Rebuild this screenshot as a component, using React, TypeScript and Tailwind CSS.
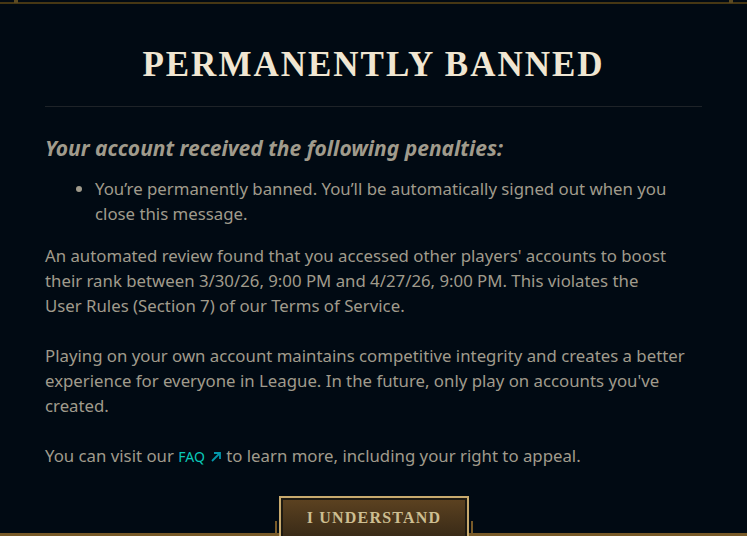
export default function App() {
    const body = "text-[#a09b8c] text-[16.8px] leading-[25px]";

    return (
        <div className="w-[747px] h-[536px] bg-[#010a13] relative overflow-hidden" style={{ fontFamily: '"Noto Sans", "Open Sans", sans-serif' }}>
            {/* top frame */}
            <div className="absolute top-[2px] left-0 right-0 h-[2px] bg-[#463714]" />
            <div className="absolute top-0 left-[14px] w-[4px] h-[3px] bg-[#5b4a22]" />
            <div className="absolute top-0 right-[14px] w-[4px] h-[3px] bg-[#5b4a22]" />

            <div className="px-[45px] pt-[45px]">
                <h1
                    className="text-center text-[#f0e6d2] text-[35px] leading-[40px] font-bold tracking-[2px]"
                    style={{ fontFamily: '"Liberation Serif", "DejaVu Serif", serif' }}
                >
                    PERMANENTLY BANNED
                </h1>
                <div className="mt-[21px] h-px bg-[#1e2328]" />

                <h2 className="mt-[27px] text-[#a09b8c] text-[21px] leading-[28px] font-bold italic">
                    Your account received the following penalties:
                </h2>

                <ul className={`mt-[14px] pl-[50px] list-disc ${body}`}>
                    <li>
                        You’re permanently banned. You’ll be automatically signed out when you close this message.
                    </li>
                </ul>

                <p className={`mt-[17px] pr-[25px] ${body}`}>
                    An automated review found that you accessed other players' accounts to boost their rank between 3/30/26, 9:00 PM and 4/27/26, 9:00 PM. This violates the User Rules (Section 7) of our Terms of Service.
                </p>
                <p className={`mt-[25px] ${body}`}>
                    Playing on your own account maintains competitive integrity and creates a better experience for everyone in League. In the future, only play on accounts you've created.
                </p>
                <p className={`mt-[25px] ${body}`}>
                    You can visit our{" "}
                    <span className="text-[#0ac8b9] text-[14px] inline-flex items-center gap-[5px]">
                        FAQ
                        <svg width="12" height="12" viewBox="0 0 12 12" fill="none" stroke="#0397ab" strokeWidth="1.8">
                            <path d="M2 10 L10 2 M4 2 H10 V8" />
                        </svg>
                    </span>{" "}
                    to learn more, including your right to appeal.
                </p>
            </div>

            {/* bottom frame */}
            <div className="absolute bottom-0 left-0 right-0 h-[3px] bg-[#785a28]" />

            {/* button */}
            <div className="absolute left-[275px] bottom-0 flex items-end gap-[2px]">
                <div className="w-[2px] h-[15px] bg-[#785a28]" />
                <div className="w-[190px] h-[40px] border-2 border-b-0 border-[#c8aa6e] bg-[#1e1a12] p-[2px] pb-0">
                    <div
                        className="h-full flex items-center justify-center bg-gradient-to-b from-[#5b4120] to-[#3a2b17] text-[#cdbe91] text-[16px] font-bold tracking-[1.2px]"
                        style={{ fontFamily: '"Liberation Serif", "DejaVu Serif", serif' }}
                    >
                        I UNDERSTAND
                    </div>
                </div>
                <div className="w-[2px] h-[15px] bg-[#785a28]" />
            </div>
        </div>
    );
}
